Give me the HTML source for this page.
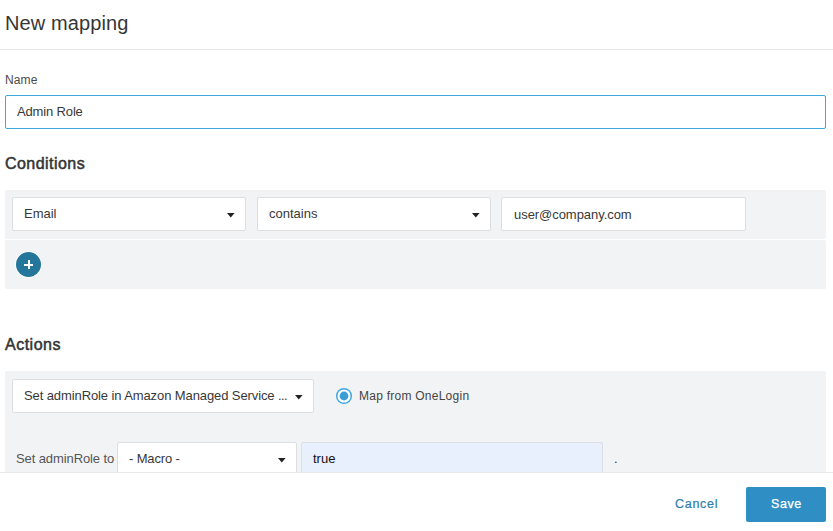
<!DOCTYPE html>
<html><head><meta charset="utf-8">
<style>
*{box-sizing:border-box;margin:0;padding:0}
html,body{width:833px;height:531px;overflow:hidden;background:#fff;font-family:"Liberation Sans",sans-serif;color:#333}
.abs{position:absolute}
.t{position:absolute;white-space:nowrap;line-height:1}
.title{left:5px;top:13px;font-size:20px;color:#363636;letter-spacing:0.1px}
.hr{left:0;top:49px;width:833px;height:1px;background:#e4e6e8}
.lbl{left:5px;top:74px;font-size:12px;color:#4a4a4a;letter-spacing:0.1px}
.inp{position:absolute;background:#fff;border:1px solid #dcdedf;border-radius:2px}
.name{left:5px;top:95px;width:821px;height:34px;border:1px solid #3da7de}
.h2{font-size:16px;font-weight:normal;color:#333;-webkit-text-stroke:0.5px #333}
.panel{position:absolute;background:#f2f3f5;border-radius:2px}
.sel .arr{position:absolute;display:block}
.v{position:absolute;font-size:13px;color:#383838;white-space:nowrap;line-height:1}
.plus{position:absolute;left:16px;top:252px;width:25px;height:25px;border-radius:50%;background:#24769b;box-shadow:0 0 0 1px rgba(255,255,255,.7)}
.plus:before{content:"";position:absolute;left:8px;top:11.5px;width:9px;height:2px;background:#fff}
.plus:after{content:"";position:absolute;left:11.5px;top:8px;width:2px;height:9px;background:#fff}
.footer{position:absolute;left:0;top:472px;width:833px;height:59px;background:#fff;border-top:1px solid #e4e6e8}
.save{position:absolute;left:746px;top:487px;width:80px;height:34.5px;background:#2f8fc4;border-radius:2px}
</style></head><body>
<div class="t title">New mapping</div>
<div class="abs hr"></div>
<div class="t lbl">Name</div>
<div class="inp name"></div>
<div class="v" style="left:17px;top:105px;letter-spacing:-0.15px">Admin Role</div>

<div class="t h2" style="left:5px;top:156px;letter-spacing:0.45px">Conditions</div>
<div class="panel" style="left:5px;top:190px;width:821px;height:49px"></div>
<div class="panel" style="left:5px;top:240px;width:821px;height:49px"></div>

<div class="inp sel" style="left:12px;top:197px;width:234px;height:34px"><svg class="arr" style="left:213.6px;top:14.6px" width="8" height="5" viewBox="0 0 8 5"><path d="M0 0H7.6L3.8 4.4Z" fill="#222"/></svg></div>
<div class="v" style="left:24px;top:207px">Email</div>
<div class="inp sel" style="left:257px;top:197px;width:234px;height:34px"><svg class="arr" style="left:213.6px;top:14.6px" width="8" height="5" viewBox="0 0 8 5"><path d="M0 0H7.6L3.8 4.4Z" fill="#222"/></svg></div>
<div class="v" style="left:269px;top:207px">contains</div>
<div class="inp" style="left:501px;top:197px;width:245px;height:34px"></div>
<div class="v" style="left:514px;top:208px;letter-spacing:-0.05px">user@company.com</div>
<div class="plus"></div>

<div class="t h2" style="left:5px;top:337px;letter-spacing:0.5px">Actions</div>
<div class="panel" style="left:5px;top:371px;width:821px;height:110px"></div>
<div class="inp sel" style="left:12px;top:379px;width:302px;height:34px"><svg class="arr" style="left:281.6px;top:14.6px" width="8" height="5" viewBox="0 0 8 5"><path d="M0 0H7.6L3.8 4.4Z" fill="#222"/></svg></div>
<div class="v" style="left:24px;top:389px;letter-spacing:-0.1px">Set adminRole in Amazon Managed Service <span style="letter-spacing:-0.6px">...</span></div>
<svg style="position:absolute;left:334px;top:386px" width="20" height="20" viewBox="0 0 20 20"><circle cx="10" cy="10" r="7.3" fill="#fff" stroke="#40a8dc" stroke-width="1.5"/><circle cx="10" cy="10" r="4.4" fill="#3a9dd4"/></svg>
<div class="v" style="left:359px;top:390px;font-size:12px;letter-spacing:0.25px;color:#444">Map from OneLogin</div>

<div class="v" style="left:16px;top:452px;color:#555;letter-spacing:-0.1px">Set adminRole to</div>
<div class="inp sel" style="left:117px;top:442px;width:180px;height:34px"><svg class="arr" style="left:159.6px;top:14.6px" width="8" height="5" viewBox="0 0 8 5"><path d="M0 0H7.6L3.8 4.4Z" fill="#222"/></svg></div>
<div class="v" style="left:129px;top:452px;letter-spacing:-0.15px">- Macro -</div>
<div class="inp" style="left:301px;top:442px;width:302px;height:34px;background:#e8f0fe"></div>
<div class="v" style="left:313px;top:452px;color:#111">true</div>
<div class="v" style="left:614px;top:452px">.</div>

<div class="footer"></div>
<div class="v" style="left:675px;top:497.5px;font-size:12.5px;color:#2b7eab;letter-spacing:0.7px;-webkit-text-stroke:0.2px #2b7eab">Cancel</div>
<div class="save"></div>
<div class="v" style="left:771px;top:497.5px;font-size:12.5px;color:#fff;letter-spacing:0.55px;-webkit-text-stroke:0.25px #fff">Save</div>
</body></html>
